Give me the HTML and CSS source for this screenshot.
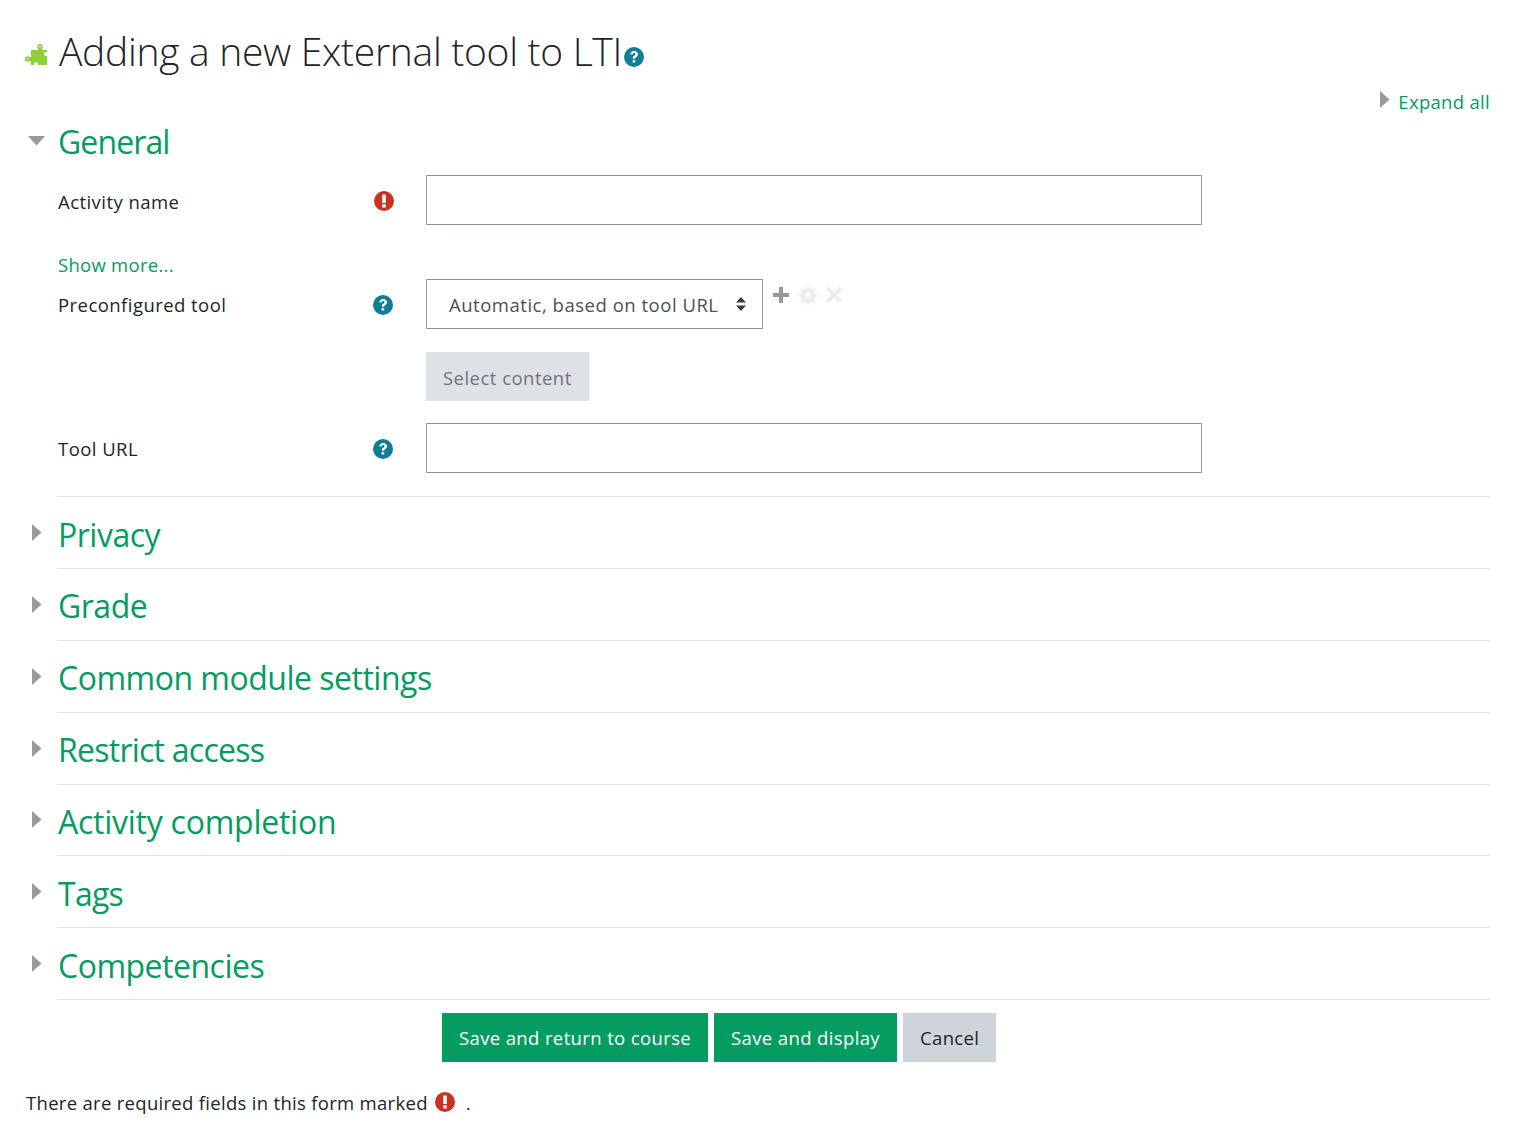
FILE: index.html
```html
<!DOCTYPE html>
<html lang="en">
<head>
    <meta charset="UTF-8">
    <meta name="viewport" content="width=device-width, initial-scale=1.0">
    <title>Adding a new External tool to LTI</title>
    <link rel="stylesheet" href="styles.css">
</head>
<body>
    <svg class="icon-defs" width="0" height="0" aria-hidden="true">
        <symbol id="icon-help" viewBox="0 0 20 20">
            <circle cx="10" cy="10" r="10" fill="#0f7f95"/>
            <path d="M6.3 7.6C6.5 5.2 8.1 4 10.2 4c2.2 0 3.8 1.300 3.800 3.200 0 1.500-.9 2.300-1.900 3-.8.500-1 .8-1 1.600H8.800c-.1-1.500.3-2.200 1.400-3 .8-.6 1.200-.9 1.200-1.500 0-.7-.5-1.200-1.300-1.200-.9 0-1.400.6-1.500 1.500z" fill="#fff"/>
            <rect x="8.700" y="13" width="2.500" height="2.600" rx=".4" fill="#fff"/>
        </symbol>
        <symbol id="icon-required" viewBox="0 0 20 20">
            <circle cx="10" cy="10" r="10" fill="#ca3120"/>
            <rect x="8.200" y="3.500" width="3.600" height="8.500" rx=".6" fill="#fff"/>
            <rect x="8.200" y="13.300" width="3.600" height="3.300" rx=".6" fill="#fff"/>
        </symbol>
        <symbol id="icon-closed" viewBox="0 0 10 18">
            <path d="M0 0l9.500 8.500L0 17z" fill="#999"/>
        </symbol>
    </svg>

    <div class="heading">
        <svg class="puzzle" viewBox="0 0 22 22" aria-hidden="true">
            <circle cx="15" cy="2.600" r="2.200" fill="#b5e07a" stroke="#80bb2e" stroke-width="1"/>
            <circle cx="2.600" cy="15" r="2.200" fill="#b5e07a" stroke="#80bb2e" stroke-width="1"/>
            <rect x="6" y="6" width="16" height="15" fill="#8fd13a"/>
            <rect x="13" y="4" width="4" height="3" fill="#8fd13a"/>
            <rect x="4" y="13" width="3" height="4" fill="#8fd13a"/>
            <circle cx="21" cy="10" r="2" fill="#fff"/>
            <circle cx="11" cy="20.500" r="2.200" fill="#fff"/>
        </svg>
        <h2 class="page-title">Adding a new External tool to LTI</h2>
        <svg class="help-small"><use href="#icon-help"/></svg>
    </div>

    <div class="expand-row">
        <svg class="caret-small"><use href="#icon-closed"/></svg>
        <a class="expand-link" href="#">Expand all</a>
    </div>

    <form class="mform">
        <section class="general">
            <div class="section-head">
                <svg class="caret-open" viewBox="0 0 18 10" aria-hidden="true"><path d="M0 0h17L8.500 9.500z" fill="#999"/></svg>
                <h3 class="section-title">General</h3>
            </div>

            <div class="field field-name">
                <label class="field-label">Activity name</label>
                <svg class="field-icon"><use href="#icon-required"/></svg>
                <input class="text-input" type="text">
            </div>

            <a class="show-more" href="#">Show more...</a>

            <div class="field field-tool">
                <label class="field-label">Preconfigured tool</label>
                <svg class="field-icon"><use href="#icon-help"/></svg>
                <div class="select-box">
                    <span>Automatic, based on tool URL</span>
                    <svg class="select-arrows" viewBox="0 0 12 16" aria-hidden="true">
                        <path d="M6 1l5 5.500H1zM6 15l-5-5.500h10z" fill="#373a3c"/>
                    </svg>
                </div>
                <div class="tool-actions">
                    <svg viewBox="0 0 16 16" aria-hidden="true"><path d="M6 0h4v6h6v4h-6v6H6v-6H0V6h6z" fill="#999"/></svg>
                    <svg viewBox="0 0 16 16" aria-hidden="true">
                        <path fill="#ececec" d="M6.500 0h3l.4 2.200 1.400.6 1.900-1.300 2.100 2.100-1.300 1.900.6 1.400 2.200.4v3l-2.200.4-.6 1.400 1.300 1.900-2.100 2.100-1.900-1.300-1.400.6-.4 2.200h-3l-.4-2.200-1.400-.6-1.900 1.300L.7 13.500 2 11.600l-.6-1.400L-.8 9.800v-3l2.200-.4.600-1.400L.7 3.100 2.800 1l1.900 1.300 1.400-.6zM8 5.300a2.700 2.700 0 100 5.400 2.700 2.700 0 000-5.400z"/>
                    </svg>
                    <svg viewBox="0 0 16 16" aria-hidden="true"><path d="M2.800 0L8 5.200 13.200 0 16 2.800 10.800 8l5.200 5.200-2.800 2.800L8 10.800 2.800 16 0 13.200 5.200 8 0 2.800z" fill="#ececec"/></svg>
                </div>
            </div>

            <button class="btn btn-disabled" type="button">Select content</button>

            <div class="field field-url">
                <label class="field-label">Tool URL</label>
                <svg class="field-icon"><use href="#icon-help"/></svg>
                <input class="text-input" type="text">
            </div>
        </section>

        <div class="collapsed-list">
            <div class="collapsed"><svg class="caret"><use href="#icon-closed"/></svg><h3 class="section-title">Privacy</h3></div>
            <div class="collapsed"><svg class="caret"><use href="#icon-closed"/></svg><h3 class="section-title">Grade</h3></div>
            <div class="collapsed"><svg class="caret"><use href="#icon-closed"/></svg><h3 class="section-title">Common module settings</h3></div>
            <div class="collapsed"><svg class="caret"><use href="#icon-closed"/></svg><h3 class="section-title title-tight">Restrict access</h3></div>
            <div class="collapsed"><svg class="caret"><use href="#icon-closed"/></svg><h3 class="section-title title-wide">Activity completion</h3></div>
            <div class="collapsed"><svg class="caret"><use href="#icon-closed"/></svg><h3 class="section-title title-tight">Tags</h3></div>
            <div class="collapsed"><svg class="caret"><use href="#icon-closed"/></svg><h3 class="section-title">Competencies</h3></div>
        </div>

        <div class="form-buttons">
            <button class="btn btn-primary" type="button">Save and return to course</button>
            <button class="btn btn-primary" type="button">Save and display</button>
            <button class="btn btn-cancel" type="button">Cancel</button>
        </div>

        <p class="required-note">
            There are required fields in this form marked
            <svg class="note-icon"><use href="#icon-required"/></svg>
            <span class="note-dot">.</span>
        </p>
    </form>
</body>
</html>
```

FILE: styles.css
```css
body {
    font-family: 'Open Sans', 'Noto Sans', sans-serif;
    font-size: 18.500px;
    color: #212529;
    background-color: #ffffff;
    margin: 0;
    padding: 0;
    height: 1137px;
    overflow: hidden;
}

.icon-defs {
    display: block;
    height: 0;
}

.heading {
    display: flex;
    align-items: center;
    height: 52px;
    padding: 26px 0 0 25px;
}

.puzzle {
    width: 22px;
    height: 22px;
    margin-top: 6px;
}

.page-title {
    margin: 0 0 0 12px;
    padding-bottom: 2px;
    font-size: 39px;
    font-weight: 300;
    line-height: 52px;
    letter-spacing: -0.300px;
    color: #212529;
}

.help-small {
    width: 20px;
    height: 20px;
    margin: 10px 0 0 2px;
}

.expand-row {
    display: flex;
    align-items: center;
    justify-content: flex-end;
    height: 24px;
    margin-top: 11px;
    padding-right: 23px;
}

.caret-small {
    width: 10px;
    height: 18px;
    margin: -2px 8px 0 0;
}

.expand-link {
    font-size: 18.500px;
    letter-spacing: 0.300px;
    color: #049c60;
    text-decoration: none;
}

.mform {
    margin: 0;
}

.section-head {
    display: flex;
    align-items: center;
    height: 44px;
    margin-top: 7px;
}

.caret-open {
    width: 18px;
    height: 10px;
    margin: -2px 12px 0 28px;
}

.section-title {
    margin: 0;
    padding-bottom: 1px;
    font-size: 32px;
    font-weight: 400;
    line-height: 44px;
    letter-spacing: -0.500px;
    color: #049c60;
}

.general .section-title {
    padding-bottom: 0;
    letter-spacing: -0.900px;
}

.title-tight {
    letter-spacing: -0.750px;
}

.title-wide {
    letter-spacing: -0.250px;
}

.field {
    display: flex;
    align-items: center;
    padding-left: 58px;
}

.field-label {
    width: 315px;
    padding-top: 1px;
    font-size: 18.500px;
    color: #212529;
    letter-spacing: 0.450px;
}

.field-icon {
    width: 20px;
    height: 20px;
    margin-top: 2px;
}

.text-input {
    box-sizing: border-box;
    width: 776px;
    height: 50px;
    margin-left: 33px;
    padding: 0 16px;
    background-color: #ffffff;
    border: 1px solid #8f959e;
    border-radius: 0;
}

.field-name {
    margin-top: 11px;
}

.field-name .field-label {
    padding-top: 3px;
    width: 316px;
}

.field-name .text-input {
    margin-left: 32px;
}

.show-more {
    display: block;
    margin: 27px 0 0 58px;
    font-size: 18.500px;
    line-height: 26px;
    letter-spacing: 0.270px;
    color: #049c60;
    text-decoration: none;
}

.field-tool {
    align-items: flex-start;
    margin-top: 1px;
}

.field-tool .field-label {
    line-height: 50px;
}

.field-tool .field-icon {
    margin-top: 16px;
}

.select-box {
    box-sizing: border-box;
    display: flex;
    align-items: center;
    justify-content: space-between;
    width: 337px;
    height: 50px;
    margin-left: 33px;
    padding: 0 15px 0 22px;
    font-size: 18.500px;
    letter-spacing: 0.520px;
    color: #495057;
    border: 1px solid #8f959e;
}

.select-arrows {
    width: 12px;
    height: 16px;
}

.tool-actions {
    display: flex;
    gap: 10.500px;
    margin: 8px 0 0 10px;
}

.tool-actions svg {
    width: 16px;
    height: 16px;
    overflow: visible;
}

.btn {
    box-sizing: border-box;
    height: 49px;
    padding: 1px 17px 0;
    font-family: inherit;
    font-size: 18.500px;
    letter-spacing: 0.370px;
    border: none;
    border-radius: 0;
}

.btn-disabled {
    display: block;
    margin: 22px 0 0 426px;
    letter-spacing: 0.470px;
    color: #6f7479;
    background-color: #dee2e6;
}

.field-url {
    margin-top: 22px;
}

.general {
    padding-bottom: 23.200px;
}

.collapsed {
    display: flex;
    align-items: center;
    box-sizing: border-box;
    height: 71.830px;
    margin-right: 23px;
    padding-top: 6px;
    background-image: linear-gradient(#dee2e6, #dee2e6);
    background-size: calc(100% - 58px) 1px;
    background-position: 58px 0;
    background-repeat: no-repeat;
}

.caret {
    width: 10px;
    height: 18px;
    margin: -4px 16px 0 32px;
}

.form-buttons {
    display: flex;
    gap: 6px;
    padding-left: 442px;
    padding-top: 14px;
    background-image: linear-gradient(#dee2e6, #dee2e6);
    background-size: 1432px 1px;
    background-position: 58px 0;
    background-repeat: no-repeat;
}

.btn-primary {
    color: #ffffff;
    background-color: #049c60;
}

.btn-cancel {
    color: #212529;
    background-color: #ced4da;
}

.required-note {
    display: flex;
    align-items: center;
    margin: 28px 0 0 26px;
    font-size: 18.500px;
    letter-spacing: 0.300px;
    color: #212529;
}

.note-icon {
    width: 20px;
    height: 20px;
    margin: 0 0 0 7px;
}

.note-dot {
    margin-left: 11px;
}
```
